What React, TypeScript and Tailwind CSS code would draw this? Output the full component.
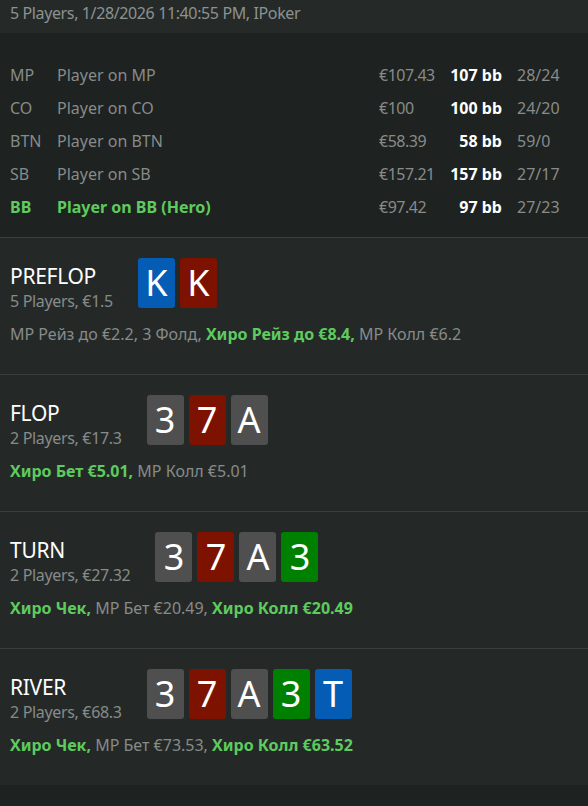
const players = [
  { pos: "MP", name: "Player on MP", stack: "€107.43", bb: "107 bb", stats: "28/24" },
  { pos: "CO", name: "Player on CO", stack: "€100", bb: "100 bb", stats: "24/20" },
  { pos: "BTN", name: "Player on BTN", stack: "€58.39", bb: "58 bb", stats: "59/0" },
  { pos: "SB", name: "Player on SB", stack: "€157.21", bb: "157 bb", stats: "27/17" },
  { pos: "BB", name: "Player on BB (Hero)", stack: "€97.42", bb: "97 bb", stats: "27/23", hero: true },
];

type Card = { v: string; c: "b" | "r" | "g" | "n" };

const cardBg = {
  b: "bg-[#055cb5]",
  r: "bg-[#7e1200]",
  g: "bg-[#4f4f4f]",
  n: "bg-[#008000]",
};

type Act = { t: string; hero?: boolean };

const streets: { title: string; sub: string; cards: Card[]; acts: Act[] }[] = [
  {
    title: "PREFLOP",
    sub: "5 Players, €1.5",
    cards: [
      { v: "K", c: "b" },
      { v: "K", c: "r" },
    ],
    acts: [
      { t: "MP Рейз до €2.2, 3 Фолд, " },
      { t: "Хиро Рейз до €8.4,", hero: true },
      { t: " MP Колл €6.2" },
    ],
  },
  {
    title: "FLOP",
    sub: "2 Players, €17.3",
    cards: [
      { v: "3", c: "g" },
      { v: "7", c: "r" },
      { v: "A", c: "g" },
    ],
    acts: [
      { t: "Хиро Бет €5.01,", hero: true },
      { t: " MP Колл €5.01" },
    ],
  },
  {
    title: "TURN",
    sub: "2 Players, €27.32",
    cards: [
      { v: "3", c: "g" },
      { v: "7", c: "r" },
      { v: "A", c: "g" },
      { v: "3", c: "n" },
    ],
    acts: [
      { t: "Хиро Чек,", hero: true },
      { t: " MP Бет €20.49, " },
      { t: "Хиро Колл €20.49", hero: true },
    ],
  },
  {
    title: "RIVER",
    sub: "2 Players, €68.3",
    cards: [
      { v: "3", c: "g" },
      { v: "7", c: "r" },
      { v: "A", c: "g" },
      { v: "3", c: "n" },
      { v: "T", c: "b" },
    ],
    acts: [
      { t: "Хиро Чек,", hero: true },
      { t: " MP Бет €73.53, " },
      { t: "Хиро Колл €63.52", hero: true },
    ],
  },
];

const App = () => {
  return (
    <div className="w-[588px] h-[806px] bg-[#1e2220] font-['Segoe_UI','Noto_Sans',sans-serif] text-[16px] text-[#878b8a] overflow-hidden">
      <div className="h-[33px] bg-[#252a29] px-[10px] leading-[26px] tracking-[-0.38px] text-[#8b9291]">
        5 Players, 1/28/2026 11:40:55 PM, IPoker
      </div>

      <div className="pt-[25px] pb-[14px] px-[10px]">
        {players.map((p) => (
          <div
            key={p.pos}
            className={`flex items-center h-[33px] ${p.hero ? "text-[#5ecb5e] font-bold" : ""}`}
          >
            <span className="w-[47px]">{p.pos}</span>
            <span className="flex-1">{p.name}</span>
            <span className="w-[70px] font-normal tracking-[-0.5px] text-[#878b8a]">{p.stack}</span>
            <span className="w-[53px] text-right font-bold text-white">{p.bb}</span>
            <span className="w-[76px] pl-[15px] font-normal text-[#878b8a]">{p.stats}</span>
          </div>
        ))}
      </div>

      {streets.map((s) => (
        <div key={s.title} className="border-t border-[#3a3f3e] bg-[#242928] px-[10px] pt-[20px] pb-[29px]">
          <div className="flex items-start h-[50px]">
            <div className="mt-[5px]">
              <div className="text-[21px] leading-[26px] tracking-[-0.3px] text-white">{s.title}</div>
              <div className="leading-[24px] tracking-[-0.33px]">{s.sub}</div>
            </div>
            <div className="flex gap-[5px] ml-[25px]">
              {s.cards.map((c, i) => (
                <div
                  key={i}
                  className={`w-[37px] h-[50px] rounded-[3px] ${cardBg[c.c]} flex items-center justify-center text-white text-[36px]`}
                >
                  {c.v}
                </div>
              ))}
            </div>
          </div>
          <div className="mt-[15px] leading-[22px]">
            {s.acts.map((a, i) => (
              <span key={i} className={a.hero ? "text-[#5ecb5e] font-bold" : ""}>
                {a.t}
              </span>
            ))}
          </div>
        </div>
      ))}
    </div>
  );
};

export default App;
